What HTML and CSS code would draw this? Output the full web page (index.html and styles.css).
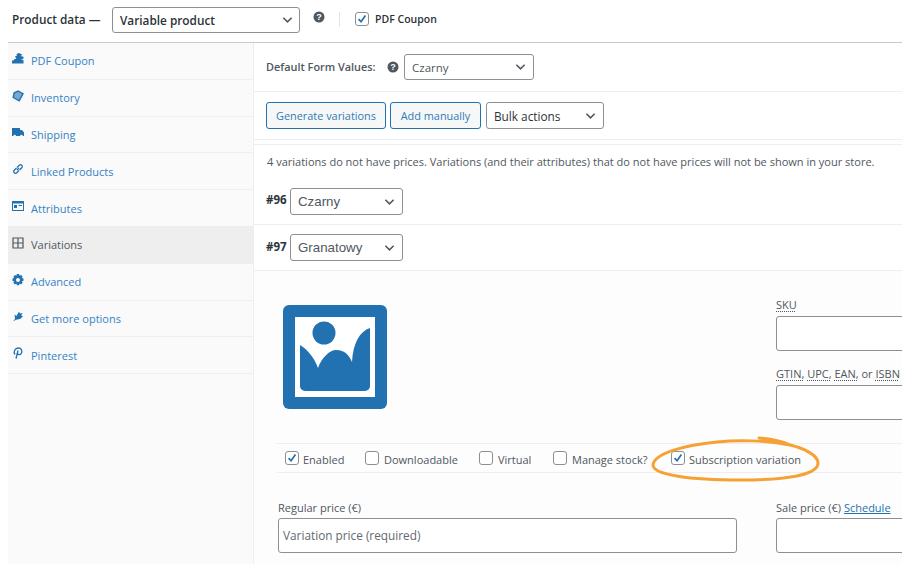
FILE: index.html
```html
<!DOCTYPE html>
<html lang="en">
<head>
<meta charset="utf-8">
<title>Product data</title>
<link rel="stylesheet" href="styles.css">
</head>
<body>
<div class="page">
  <header class="topbar">
    <span class="title">Product data —</span>
    <div class="select type-select"><span>Variable product</span><svg class="chev" viewBox="0 0 12 8"><path d="M1.500 1.500 6 6l4.500-4.500"/></svg></div>
    <svg class="help help-top" viewBox="0 0 12 12"><circle cx="6" cy="6" r="5.500"/><text x="6" y="9.200" text-anchor="middle">?</text></svg>
    <span class="vrule"></span>
    <label class="check top-check"><span class="box on"><svg viewBox="0 0 14 14"><path d="M3 7.200 5.900 10.200 11 2.800"/></svg></span><b>PDF Coupon</b></label>
  </header>
  <div class="main">
    <nav class="side">
      <a class="tab">
        <svg viewBox="0 0 12 12"><path d="M0 10.500V7.500h1.500L2.500 6h1.800L3 3.500l2-1L4.500 1 7 0l2 1 1.500.8L8.500 3l3 .7v2l-2.500.6 2.500.9v3.300z"/></svg>PDF Coupon</a>
      <a class="tab">
        <svg class="tag" viewBox="0 0 12 12"><path d="M6.300 1 11 3.700 7.200 10.800 1.200 7.500 2.200 2.800z"/></svg>Inventory</a>
      <a class="tab">
        <svg viewBox="0 0 12 12"><path d="M0 2h8v2h2l2 2.500V10h-1.200a1.300 1.300 0 0 0-2.600 0H4a1.300 1.300 0 0 0-2.600 0H0z"/></svg>Shipping</a>
      <a class="tab">
        <svg viewBox="0 0 12 12" class="outline"><path d="M5 7l2-2M4.500 5 2 7.500a1.800 1.800 0 0 0 2.500 2.500L7 7.500M5 4.500 7.500 2A1.800 1.800 0 0 1 10 4.500L7.500 7"/></svg>Linked Products</a>
      <a class="tab">
        <svg viewBox="0 0 12 12"><path fill-rule="evenodd" d="M0 1h12v10H0zM1 3.500V10h10V3.500zM2 5h3v3H2zM6.500 5H10v1H6.500z"/></svg>Attributes</a>
      <a class="tab active">
        <svg viewBox="0 0 12 12" class="grid"><path d="M1 1h10v10H1zM6 1v10M1 6h10"/></svg>Variations</a>
      <a class="tab">
        <svg viewBox="0 0 12 12"><path fill-rule="evenodd" d="M4.800 0h2.400l.3 1.700 1.500-.8 1.700 1.700-.9 1.400 1.700.4v2.400l-1.700.4.900 1.500-1.700 1.700-1.500-.9-.3 1.700H4.800l-.4-1.700-1.400.9L1.300 8.800l.9-1.500-1.700-.4V4.500l1.700-.4-.9-1.400L3 .9l1.400.8zM6 4a2 2 0 1 0 0 4 2 2 0 0 0 0-4z"/></svg>Advanced</a>
      <a class="tab">
        <svg viewBox="0 0 12 12"><path d="M1 11.500 3 9 2.600 4.500 4.500 6 7 1.500 8 3.500 10.500 3 9.300 5.500 11 6.500 8 9 4 9.800z"/></svg>Get more options</a>
      <a class="tab">
        <svg viewBox="0 0 12 12" class="outline"><path d="M3 7.500C1 5 3 1 6.300 1 9.500 1 10.500 4 9.300 6.300 8.300 8 6 7.800 5.700 6.500M6 3.500 4 11.500"/></svg>Pinterest</a>
    </nav>
    <section class="panel">
      <div class="defaults">
        <span class="def-label">Default Form Values:</span>
        <svg class="help" viewBox="0 0 12 12"><circle cx="6" cy="6" r="5.500"/><text x="6" y="9.200" text-anchor="middle">?</text></svg>
        <div class="select def-select"><span>Czarny</span><svg class="chev" viewBox="0 0 12 8"><path d="M1.500 1.500 6 6l4.500-4.500"/></svg></div>
      </div>
      <div class="toolbar">
        <button class="btn gen">Generate variations</button>
        <button class="btn add">Add manually</button>
        <div class="select bulk"><span>Bulk actions</span><svg class="chev" viewBox="0 0 12 8"><path d="M1.500 1.500 6 6l4.500-4.500"/></svg></div>
      </div>
      <p class="notice">4 variations do not have prices. Variations (and their attributes) that do not have prices will not be shown in your store.</p>
      <div class="var-row first">
        <b>#96</b>
        <div class="select var-select"><span>Czarny</span><svg class="chev" viewBox="0 0 12 8"><path d="M1.500 1.500 6 6l4.500-4.500"/></svg></div>
      </div>
      <div class="var-row">
        <b>#97</b>
        <div class="select var-select"><span>Granatowy</span><svg class="chev" viewBox="0 0 12 8"><path d="M1.500 1.500 6 6l4.500-4.500"/></svg></div>
      </div>
      <div class="detail">
        <div class="media">
          <svg class="placeholder" viewBox="0 0 104 104">
            <rect width="104" height="104" rx="6" fill="#2271b1"/>
            <rect x="12" y="12" width="80" height="80" fill="#fff"/>
            <circle cx="41" cy="28" r="11.500" fill="#2271b1"/>
            <path fill="#2271b1" d="M17 40C24 44 31 52 35 63 39 52 47 45 53 45 62 45 66 50 69 57 70 38 77 26 87 23V81a5 5 0 0 1-5 5H22a5 5 0 0 1-5-5z"/>
          </svg>
          <div class="codes">
            <label class="sku"><abbr>SKU</abbr></label>
            <div class="input"></div>
            <label class="gtin"><abbr>GTIN,</abbr> <abbr>UPC,</abbr> <abbr>EAN,</abbr> or <abbr>ISBN</abbr></label>
            <div class="input"></div>
          </div>
        </div>
        <div class="options">
          <label class="check"><span class="box on"><svg viewBox="0 0 14 14"><path d="M3 7.200 5.900 10.200 11 2.800"/></svg></span>Enabled</label>
          <label class="check"><span class="box"></span>Downloadable</label>
          <label class="check"><span class="box"></span>Virtual</label>
          <label class="check"><span class="box"></span>Manage stock?</label>
          <label class="check"><span class="box on"><svg viewBox="0 0 14 14"><path d="M3 7.200 5.900 10.200 11 2.800"/></svg></span>Subscription variation</label>
        </div>
        <div class="prices">
          <div class="price regular">
            <label>Regular price (€)</label>
            <div class="input wide">Variation price (required)</div>
          </div>
          <div class="price sale">
            <label>Sale price (€) <a>Schedule</a></label>
            <div class="input"></div>
          </div>
        </div>
      </div>
    </section>
  </div>
  <svg class="scribble" viewBox="0 0 170 47"><path d="M108 2C120 3 131 5 139 9 115 4 85 4 66 6 35 9 3 17 2 29 2 39 40 44 89 44 130 44 167 40 167 27 167 19 152 12 139 9"/></svg>
</div>
</body>
</html>
```
FILE: styles.css
```css
* { box-sizing: border-box; }
html, body { margin: 0; height: 100%; overflow: hidden; background: #fff; }
body { font-family: "Open Sans", "Noto Sans", sans-serif; font-size: 11px; color: #50575e; }
.page { position: relative; width: 904px; height: 564px; padding: 0 2px 0 8px; overflow: hidden; }

.topbar { height: 43px; margin-left: -8px; padding: 0 0 1px 12px; display: flex; align-items: center; position: relative; }
.topbar::after { content: ""; position: absolute; left: 8px; right: 0; bottom: 0; height: 1px; background: #c9c9c9; }
.title { font-weight: 600; font-size: 11.800px; color: #2c3338; width: 100px; margin-top: -4px; }
.select { display: flex; align-items: center; justify-content: space-between; background: #fff; border: 1px solid #8c8f94; border-radius: 3px; color: #2c3338; }
.chev { width: 11px; height: 8px; fill: none; stroke: #50575e; stroke-width: 1.700; flex: none; }
.type-select { width: 188px; height: 26px; padding: 0 6px 0 7px; font-size: 11.800px; font-weight: 600; margin-top: -2px; }
.help { width: 12px; height: 12px; flex: none; }
.help circle { fill: #50575e; }
.help text { fill: #fff; font: 700 9px "Liberation Sans", sans-serif; }
.help-top { margin: -8px 0 0 13px; }
.vrule { width: 1px; height: 15px; background: #e4e4e4; margin: -4px 0 0 14px; }
.check { display: flex; align-items: center; color: #50575e; }
.box { width: 14px; height: 14px; border: 1px solid #8c8f94; border-radius: 3px; background: #fff; display: flex; flex: none; margin-right: 4px; }
.box:not(.on) { margin-right: 5px; }
.box svg { width: 100%; height: 100%; fill: none; stroke: #2271b1; stroke-width: 2; }
.top-check { margin: -4px 0 0 15px; }
.top-check .box { margin-right: 6px; }
.top-check b { font-weight: 600; font-size: 10.500px; color: #2c3338; }

.main { display: flex; height: 521px; }
.side { width: 246px; flex: none; background: #fafafa; border-right: 1px solid #eee; }
.tab { height: 36.800px; display: flex; align-items: center; padding: 0 0 0 4px; border-bottom: 1px solid #eee; color: #3582c4; font-size: 11px; }
.tab svg { width: 12px; height: 12px; margin: -4px 7px 0 0; fill: #2271b1; flex: none; }
.tab svg.outline { fill: none; stroke: #2271b1; stroke-width: 1.300; }
.tab svg.tag { fill: #7aa7cf; stroke: #2271b1; stroke-width: 1.400; }
.tab svg.grid { fill: none; stroke: #50575e; stroke-width: 1.200; }
.tab.active { background: #eee; color: #50575e; }

.panel { flex: 1; min-width: 0; overflow: hidden; }
.defaults { height: 49px; display: flex; align-items: center; border-bottom: 1px solid #eee; padding: 0 0 0 12px; }
.def-label { font-size: 10.900px; font-weight: 600; color: #50575e; width: 121px; margin-top: -1px; }
.defaults .help { margin: -1px 5px 0 0; }
.def-select { width: 130px; height: 26px; padding: 0 7px; font-size: 11.500px; color: #50575e; }
.toolbar { height: 48px; display: flex; align-items: center; border-bottom: 1px solid #eee; padding: 0 0 0 12px; gap: 4px; }
.btn { height: 27px; font: 10.900px "Open Sans", sans-serif; color: #2f7cb8; background: #f6f7f7; border: 1px solid #2271b1; border-radius: 3px; padding: 0; }
.gen { width: 120px; }
.add { width: 91px; }
.bulk { width: 118px; height: 27px; margin-left: 1px; padding: 0 7px; font-size: 11.800px; color: #2c3338; }
.notice { margin: 4px 0 0; height: 44px; padding: 8px 0 0 13px; border-top: 1px solid #eee; font-size: 11.030px; line-height: 18px; white-space: nowrap; }
.var-row { height: 46px; display: flex; align-items: center; padding: 0 0 0 12px; border-bottom: 1px solid #eee; }
.var-row.first { height: 37px; align-items: flex-start; }
.var-row b { font: 700 11.500px "Open Sans", sans-serif; color: #2c3338; width: 24px; margin-top: -3px; }
.var-row.first b { margin-top: 4px; }
.var-select { width: 113px; height: 27px; padding: 0 7px; font: 13.300px "Liberation Sans", sans-serif; color: #50575e; }
.detail { background: #fdfdfd; height: 300px; }
.media { height: 172px; display: flex; }
.placeholder { width: 104px; height: 104px; flex: none; margin: 34px 0 0 29px; }
.codes { margin-left: 389px; width: 200px; flex: none; padding-top: 28px; }
.codes label { display: block; font-size: 11px; line-height: 12px; white-space: nowrap; }
.codes .gtin { margin-top: 17px; }
.codes .input { margin-top: 5px; }
abbr { text-decoration: underline dotted; text-underline-offset: 2px; }
.input { height: 35px; background: #fff; border: 1px solid #8c8f94; border-radius: 3px; }
.codes .input { width: 200px; }
.options { height: 30px; margin: 0 0 0 23px; padding: 2px 0 0 8px; display: flex; align-items: center; border-top: 1px solid #eee; border-bottom: 1px solid #eee; font-size: 11px; }
.options .check:nth-child(1) { width: 80px; }
.options .check:nth-child(2) { width: 114px; }
.options .check:nth-child(3) { width: 74px; }
.options .check:nth-child(4) { width: 118px; }
.options .box { margin-top: -3px; }
.prices { display: flex; padding: 29px 0 0 24px; }
.price label { display: block; font-size: 11px; line-height: 12px; margin-bottom: 4px; white-space: nowrap; }
.price a { color: #2271b1; text-decoration: underline; }
.regular { width: 498px; flex: none; }
.wide { width: 459px; padding: 0 4px; line-height: 33px; font-size: 11.800px; color: #646970; }
.sale { flex: none; }
.sale .input { width: 200px; }
.scribble { position: absolute; left: 651px; top: 436px; width: 170px; height: 47px; fill: none; stroke: #f5a133; stroke-width: 3; stroke-linecap: round; stroke-linejoin: round; pointer-events: none; }
```
